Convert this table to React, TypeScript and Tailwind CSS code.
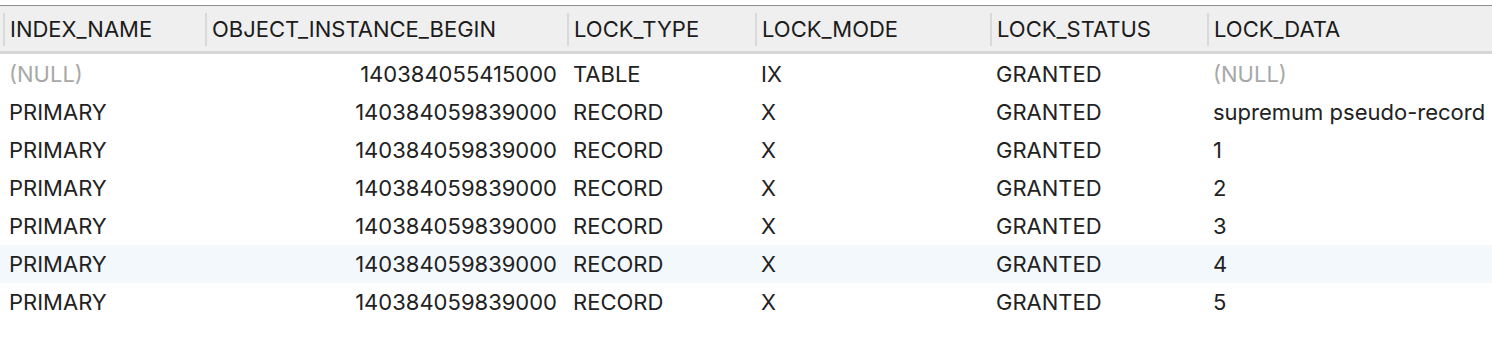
const columns = [
  { name: "INDEX_NAME", w: "w-[202px]" },
  { name: "OBJECT_INSTANCE_BEGIN", w: "w-[362px]" },
  { name: "LOCK_TYPE", w: "w-[188px]" },
  { name: "LOCK_MODE", w: "w-[235px]" },
  { name: "LOCK_STATUS", w: "w-[217px]" },
  { name: "LOCK_DATA", w: "flex-1" },
];

const rows: (string | null)[][] = [
  [null, "140384055415000", "TABLE", "IX", "GRANTED", null],
  ["PRIMARY", "140384059839000", "RECORD", "X", "GRANTED", "supremum pseudo-record"],
  ["PRIMARY", "140384059839000", "RECORD", "X", "GRANTED", "1"],
  ["PRIMARY", "140384059839000", "RECORD", "X", "GRANTED", "2"],
  ["PRIMARY", "140384059839000", "RECORD", "X", "GRANTED", "3"],
  ["PRIMARY", "140384059839000", "RECORD", "X", "GRANTED", "4"],
  ["PRIMARY", "140384059839000", "RECORD", "X", "GRANTED", "5"],
];

export default function App() {
  return (
    <div
      className="w-[1492px] h-[340px] bg-white overflow-hidden text-[22px] text-[#222]"
      style={{ fontFamily: "Inter, 'Liberation Sans', sans-serif" }}
    >
      <div className="h-[5px] bg-white" />
      <div className="flex h-[49px] bg-[#efefef] border-t border-[#8e8e8e] border-b-[3px] border-b-[#d6d6d6] pl-[3px] pt-px">
        {columns.map((c) => (
          <div key={c.name} className={`${c.w} flex items-center`}>
            <div className="w-[2px] h-[33px] bg-[#d9d9d9]" />
            <span className="pl-[5px] text-[#1c1c1c] whitespace-nowrap">{c.name}</span>
          </div>
        ))}
      </div>
      <div className="pt-px">
        {rows.map((r, i) => (
          <div
            key={i}
            className={`flex h-[38px] items-center pl-[3px] pt-px ${i === 5 ? "bg-[#f3f8fd]" : "bg-white"}`}
          >
            {r.map((v, j) => (
              <div
                key={j}
                className={`${columns[j].w} whitespace-nowrap ${j === 1 ? "text-right pr-[10px]" : "pl-[6px]"} ${v === null ? "text-[#a8a8a8]" : ""}`}
              >
                {v === null ? "(NULL)" : v}
              </div>
            ))}
          </div>
        ))}
      </div>
    </div>
  );
}
